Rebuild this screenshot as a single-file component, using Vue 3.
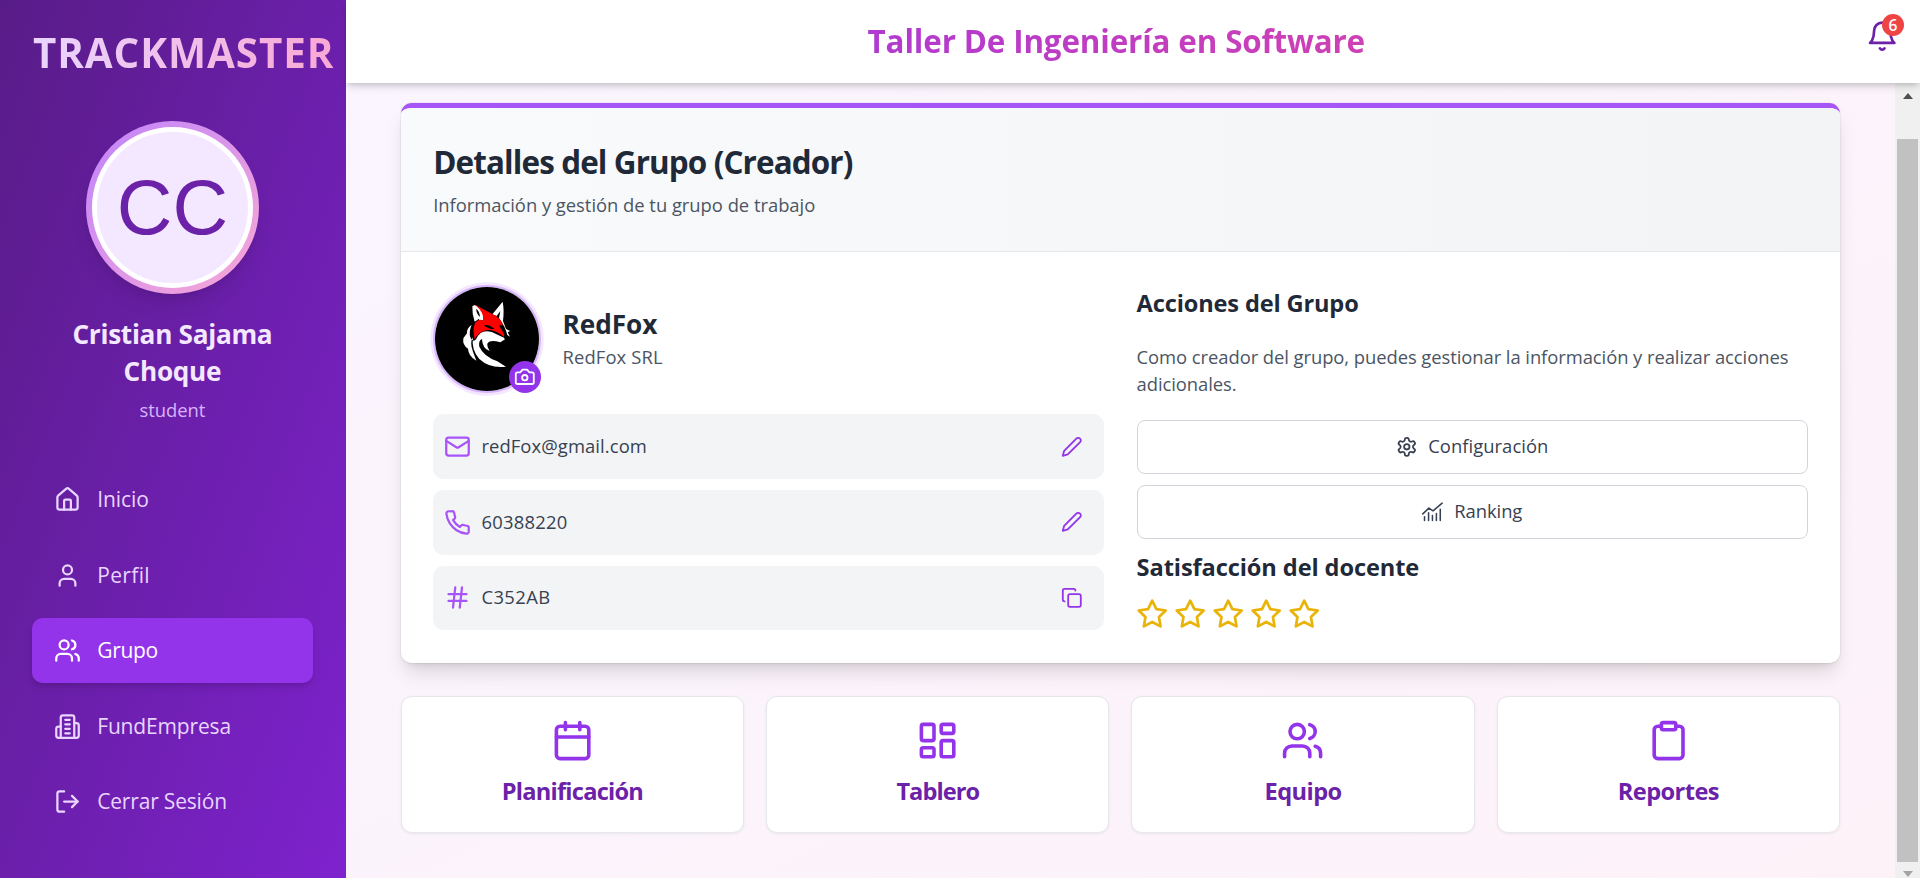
<script setup>
const icons = {
  home: '<path d="M15 21v-8a1 1 0 0 0-1-1h-4a1 1 0 0 0-1 1v8"/><path d="M3 10a2 2 0 0 1 .709-1.528l7-5.999a2 2 0 0 1 2.582 0l7 5.999A2 2 0 0 1 21 10v9a2 2 0 0 1-2 2H5a2 2 0 0 1-2-2z"/>',
  user: '<path d="M19 21v-2a4 4 0 0 0-4-4H9a4 4 0 0 0-4 4v2"/><circle cx="12" cy="7" r="4"/>',
  users: '<path d="M16 21v-2a4 4 0 0 0-4-4H6a4 4 0 0 0-4 4v2"/><circle cx="9" cy="7" r="4"/><path d="M22 21v-2a4 4 0 0 0-3-3.87"/><path d="M16 3.13a4 4 0 0 1 0 7.75"/>',
  building: '<path d="M6 22V4a2 2 0 0 1 2-2h8a2 2 0 0 1 2 2v18Z"/><path d="M6 12H4a2 2 0 0 0-2 2v6a2 2 0 0 0 2 2h2"/><path d="M18 9h2a2 2 0 0 1 2 2v9a2 2 0 0 1-2 2h-2"/><path d="M10 6h4M10 10h4M10 14h4M10 18h4"/>',
  logout: '<path d="M9 21H5a2 2 0 0 1-2-2V5a2 2 0 0 1 2-2h4"/><path d="m16 17 5-5-5-5"/><path d="M21 12H9"/>',
  bell: '<path d="M6 8a6 6 0 0 1 12 0c0 7 3 9 3 9H3s3-2 3-9"/><path d="M10.3 21a1.94 1.94 0 0 0 3.4 0"/>',
  camera: '<path d="M14.5 4h-5L7 7H4a2 2 0 0 0-2 2v9a2 2 0 0 0 2 2h16a2 2 0 0 0 2-2V9a2 2 0 0 0-2-2h-3l-2.5-3z"/><circle cx="12" cy="13" r="3"/>',
  mail: '<rect width="20" height="16" x="2" y="4" rx="2"/><path d="m22 7-8.97 5.7a1.94 1.94 0 0 1-2.06 0L2 7"/>',
  phone: '<path d="M22 16.92v3a2 2 0 0 1-2.18 2 19.79 19.79 0 0 1-8.63-3.07 19.5 19.5 0 0 1-6-6 19.79 19.79 0 0 1-3.07-8.67A2 2 0 0 1 4.11 2h3a2 2 0 0 1 2 1.72 12.84 12.84 0 0 0 .7 2.81 2 2 0 0 1-.45 2.11L8.09 9.91a16 16 0 0 0 6 6l1.27-1.27a2 2 0 0 1 2.11-.45 12.84 12.84 0 0 0 2.81.7A2 2 0 0 1 22 16.92z"/>',
  hash: '<path d="M4 9h16M4 15h16M10 3 8 21M16 3l-2 18"/>',
  edit: '<path d="M17 3a2.85 2.83 0 1 1 4 4L7.5 20.5 2 22l1.5-5.5Z"/>',
  copy: '<rect width="14" height="14" x="8" y="8" rx="2"/><path d="M4 16c-1.1 0-2-.9-2-2V4c0-1.1.9-2 2-2h10c1.1 0 2 .9 2 2"/>',
  settings: '<path d="M12.22 2h-.44a2 2 0 0 0-2 2v.18a2 2 0 0 1-1 1.73l-.43.25a2 2 0 0 1-2 0l-.15-.08a2 2 0 0 0-2.73.73l-.22.38a2 2 0 0 0 .73 2.73l.15.1a2 2 0 0 1 1 1.72v.51a2 2 0 0 1-1 1.74l-.15.09a2 2 0 0 0-.73 2.73l.22.38a2 2 0 0 0 2.73.73l.15-.08a2 2 0 0 1 2 0l.43.25a2 2 0 0 1 1 1.73V20a2 2 0 0 0 2 2h.44a2 2 0 0 0 2-2v-.18a2 2 0 0 1 1-1.73l.43-.25a2 2 0 0 1 2 0l.15.08a2 2 0 0 0 2.73-.73l.22-.39a2 2 0 0 0-.73-2.73l-.15-.08a2 2 0 0 1-1-1.74v-.5a2 2 0 0 1 1-1.74l.15-.09a2 2 0 0 0 .73-2.73l-.22-.38a2 2 0 0 0-2.73-.73l-.15.08a2 2 0 0 1-2 0l-.43-.25a2 2 0 0 1-1-1.73V4a2 2 0 0 0-2-2z"/><circle cx="12" cy="12" r="3"/>',
  ranking: '<g stroke-width="1.7"><path d="m.9 14.3 6.7-6.4 4.7 3L22.4 2.4"/><path d="M2.8 17.6v4M7.3 13v8.6M11.6 16v5.6M16 14v7.6M20.3 9.2v12.4"/></g>',
  star: '<path d="m12 2 3.09 6.26L22 9.27l-5 4.87 1.18 6.88L12 17.77l-6.18 3.25L7 14.14 2 9.27l6.91-1.01L12 2z"/>',
  calendar: '<path d="M8 2v4M16 2v4"/><rect width="18" height="18" x="3" y="4" rx="2"/><path d="M3 10h18"/>',
  board: '<rect width="7" height="9" x="3" y="3" rx="1"/><rect width="7" height="5" x="14" y="3" rx="1"/><rect width="7" height="9" x="14" y="12" rx="1"/><rect width="7" height="5" x="3" y="16" rx="1"/>',
  clipboard: '<rect width="8" height="4" x="8" y="2" rx="1"/><path d="M16 4h2a2 2 0 0 1 2 2v14a2 2 0 0 1-2 2H6a2 2 0 0 1-2-2V6a2 2 0 0 1 2-2h2"/>',
}

const nav = [
  { label: 'Inicio', icon: 'home', cls: 't-inicio' },
  { label: 'Perfil', icon: 'user', cls: 't-perfil' },
  { label: 'Grupo', icon: 'users', cls: 't-grupo', active: true },
  { label: 'FundEmpresa', icon: 'building', cls: 't-fund' },
  { label: 'Cerrar Sesión', icon: 'logout', cls: 't-cerrar' },
]
const contact = [
  { text: 'redFox@gmail.com', icon: 'mail', action: 'edit', cls: 't-mail' },
  { text: '60388220', icon: 'phone', action: 'edit', cls: 't-phone' },
  { text: 'C352AB', icon: 'hash', action: 'copy', cls: 't-code' },
]
const tiles = [
  { label: 'Planificación', icon: 'calendar', cls: 't-plan' },
  { label: 'Tablero', icon: 'board', cls: 't-tab' },
  { label: 'Equipo', icon: 'users', cls: 't-eq' },
  { label: 'Reportes', icon: 'clipboard', cls: 't-rep' },
]
</script>

<template>
  <div class="app">
    <aside class="sidebar">
      <div class="brand">TRACKMASTER</div>
      <div class="avatar"><div class="avatar-inner">CC</div></div>
      <h2 class="user-name">Cristian Sajama<br />Choque</h2>
      <p class="role">student</p>
      <nav class="nav">
        <a v-for="n in nav" :key="n.label" class="nav-item" :class="{ active: n.active }">
          <svg class="icon i27" viewBox="0 0 24 24" v-html="icons[n.icon]" />
          <span :class="n.cls">{{ n.label }}</span>
        </a>
      </nav>
    </aside>

    <div class="page">
      <header class="topbar">
        <h1 class="course">Taller De Ingeniería en Software</h1>
        <button class="bell">
          <svg class="icon i32" viewBox="0 0 24 24" v-html="icons.bell" />
          <span class="badge">6</span>
        </button>
      </header>

      <div class="scroll-area">
        <main class="content">
          <section class="card">
            <div class="card-head">
              <h2 class="card-title">Detalles del Grupo (Creador)</h2>
              <p class="card-sub">Información y gestión de tu grupo de trabajo</p>
            </div>
            <div class="card-body">
              <div class="col">
                <div class="group">
                  <div class="logo">
                    <svg class="fox" viewBox="15 21 312 312">
                      <rect x="15" y="21" width="312" height="312" fill="#000" />
                      <path fill="#fff" d="M134 75 127 79q-1 25 7 46l12-8 5 6 9-3V98q-10-16-26-23ZM187 103l31-38q5 25 1 58l9 24 12 6-7 4 7 13-8-5q-7-26-25-51l4-21-11 15Z" />
                      <path fill="#f00" d="m135 74 50 27q22 8 33 31l-4 14 9 19-1 6q-38-32-67-15-15 8-21 22-7-28 1-49 13-16 24-6 6-24-24-49Z" />
                      <path fill="#000" d="M162 136q16-4 31 11-18 2-31-11ZM208 135l14 3 4 16-13-6ZM138 87q10 5 12 23-8-3-12-23Z" />
                      <path fill="#fff" d="m138 178q15-34 49-21l35 16 3 5-14 9q-30-9-38 2-4 8 6 24-22-7-23-36-11 4-8 23 12 28 54 44l26 16q-49 6-80-23-25-28-19-65-11 15 0 43l10 27q-24-14-25-36-17-10-14-31l11-15q-2-14 14-26-8 20-5 35 8 20 18 9Z" />
                      <path fill="#000" d="m224 167 7 2-3 7-6-2Z" />
                    </svg>
                    <span class="cam"><svg class="icon i22" viewBox="0 0 24 24" v-html="icons.camera" /></span>
                  </div>
                  <div class="group-info">
                    <h3 class="group-name">RedFox</h3>
                    <p class="group-legal">RedFox SRL</p>
                  </div>
                </div>
                <div class="rows">
                  <div v-for="c in contact" :key="c.text" class="row">
                    <svg class="icon i27 lead" viewBox="0 0 24 24" v-html="icons[c.icon]" />
                    <span class="row-text" :class="c.cls">{{ c.text }}</span>
                    <svg class="icon i22 act" viewBox="0 0 24 24" v-html="icons[c.action]" />
                  </div>
                </div>
              </div>
              <div class="col">
                <h3 class="sec t-acc">Acciones del Grupo</h3>
                <p class="desc">Como creador del grupo, puedes gestionar la información y realizar acciones<br />adicionales.</p>
                <div class="btns">
                  <button class="btn"><svg class="icon i22" viewBox="0 0 24 24" v-html="icons.settings" /><span class="t-conf">Configuración</span></button>
                  <button class="btn"><svg class="icon i22" viewBox="0 0 24 24" v-html="icons.ranking" /><span class="t-rank">Ranking</span></button>
                </div>
                <h3 class="sec t-sat">Satisfacción del docente</h3>
                <div class="stars">
                  <svg v-for="s in 5" :key="s" class="icon i32" viewBox="0 0 24 24" v-html="icons.star" />
                </div>
              </div>
            </div>
          </section>

          <section class="tiles">
            <div v-for="t in tiles" :key="t.label" class="tile">
              <svg class="icon i43" viewBox="0 0 24 24" v-html="icons[t.icon]" />
              <span class="tile-label" :class="t.cls">{{ t.label }}</span>
            </div>
          </section>
        </main>
        <div class="scrollbar">
          <span class="arrow up" />
          <span class="thumb" />
          <span class="arrow down" />
        </div>
      </div>
    </div>
  </div>
</template>

<style>
body { overflow: hidden; }
</style>

<style scoped>
* { box-sizing: border-box; }
h1, h2, h3, p { margin: 0; }
button { font: inherit; color: inherit; background: none; border: 0; padding: 0; }
.app {
  display: flex; width: 100%; height: 878px; overflow: hidden;
  font: 400 18.4px/27px "Open Sans", "Noto Sans", sans-serif; color: #374151;
}
.icon { flex: none; display: block; fill: none; stroke: currentColor; stroke-width: 2; stroke-linecap: round; stroke-linejoin: round; }
.i22 { width: 21.6px; height: 21.6px; }
.i27 { width: 27px; height: 27px; }
.i32 { width: 32.4px; height: 32.4px; }
.i43 { width: 43.2px; height: 43.2px; }

.sidebar {
  flex: none; width: 346px; height: 100%; padding: 29px 33.2px 0 32px;
  background: linear-gradient(to bottom right, #581c87, #7e22ce);
}
.brand {
  width: max-content; height: 48.6px; font-size: 40.4px; line-height: 48.6px; font-weight: 700; letter-spacing: .9px; margin-left: 1px;
  background: linear-gradient(to right, #e9d5ff, #f9a8d4); background-clip: text; -webkit-background-clip: text; color: transparent;
}
.avatar {
  width: 173px; height: 173px; margin: 43.4px auto 22px; padding: 6px; border-radius: 50%;
  background: linear-gradient(to bottom right, #c084fc, #f9a8d4); box-shadow: 0 13px 20px -4px rgba(0,0,0,.1), 0 5px 8px -5px rgba(0,0,0,.1);
}
.avatar-inner {
  width: 100%; height: 100%; border-radius: 50%; border: 5px solid #fff; background: #f3e8ff; color: #6b21a8;
  font: 77px/151px "Liberation Sans", Arial, sans-serif; text-align: center;
}
.user-name { text-align: center; font-size: 26.2px; line-height: 37px; font-weight: 700; letter-spacing: -.3px; color: #f3e8ff; }
.role { margin-top: 6px; text-align: center; color: #d8b4fe; }
.nav { margin-top: 44px; display: flex; flex-direction: column; gap: 10.6px; }
.nav-item {
  display: flex; align-items: center; gap: 16.6px; height: 65px; padding: 0 21.6px; border-radius: 10.8px;
  font-size: 21px; font-weight: 500; color: #e9d5ff;
}
.nav-item.active { background: #9333ea; color: #fff; box-shadow: 0 5px 8px -1px rgba(0,0,0,.1), 0 3px 5px -2px rgba(0,0,0,.1); }

.page { flex: 1; min-width: 0; display: flex; flex-direction: column; background: linear-gradient(to bottom right, #faf5ff, #fdf2f8); }
.topbar {
  position: relative; z-index: 2; flex: none; height: 83px; padding: 0 21.6px; display: flex; align-items: center;
  background: #fff; box-shadow: 0 5px 8px -1px rgba(0,0,0,.12), 0 3px 5px -2px rgba(0,0,0,.14);
}
.course {
  flex: 1; text-align: center; font-size: 31.4px; line-height: 43px; font-weight: 700; letter-spacing: -.165px; margin: -3px 0 0 -1px;
  background: linear-gradient(to right, #9333ea, #ec4899); background-clip: text; -webkit-background-clip: text; color: transparent;
}
.bell { position: relative; margin-top: -11px; color: #6b21a8; }
.badge {
  position: absolute; left: 16px; top: -5.5px; width: 22px; height: 22px; border-radius: 50%;
  background: #ef4444; color: #fff; font-size: 15.6px; line-height: 22px; font-weight: 600; text-align: center;
}

.scroll-area { flex: 1; min-height: 0; display: flex; }
.content { flex: 1; min-width: 0; padding: 20px 55px 0 54.8px; }
.scrollbar { flex: none; width: 25px; background: #f0f0f0; display: flex; flex-direction: column; align-items: center; }
.arrow { width: 0; height: 0; border: 5.5px solid transparent; }
.up { margin-top: 10px; border-top: 0; border-bottom: 6px solid #505050; }
.thumb { width: 21px; height: 723px; margin-top: 40px; background: #c1c1c1; }
.down { margin-top: 9px; border-bottom: 0; border-top: 6px solid #a3a3a3; }

.card {
  height: 560px; border-top: 5px solid #a855f7; border-radius: 10.8px; background: #fff; overflow: hidden;
  box-shadow: 0 0 0 1px rgba(0,0,0,.04), 0 13px 20px -4px rgba(0,0,0,.13), 0 5px 8px -5px rgba(0,0,0,.13);
}
.card-head { height: 144px; padding: 32.4px; border-bottom: 1px solid #e5e7eb; background: linear-gradient(to right, #f9fafb, #f3f4f6); }
.card-title { font-size: 31.4px; line-height: 43px; font-weight: 700; letter-spacing: -.87px; color: #1f2937; }
.card-sub { margin-top: 8px; letter-spacing: -.023px; color: #4b5563; }
.card-body { display: grid; grid-template-columns: 1fr 1fr; gap: 32.4px; padding: 33px 32.4px; }
.group { display: flex; align-items: center; gap: 21.4px; }
.group-info { padding-bottom: 2px; }
.logo { position: relative; width: 108px; height: 108px; border-radius: 50%; border: 2px solid #d8b4fe; box-shadow: 0 0 0 2.7px #f3e8ff; }
.fox { display: block; width: 104px; height: 104px; border-radius: 50%; }
.cam {
  position: absolute; right: -2px; bottom: -2px; width: 32.4px; height: 32.4px; border-radius: 50%;
  display: flex; align-items: center; justify-content: center; background: #9333ea; color: #fff;
}
.group-name { font-size: 26.2px; line-height: 37.8px; font-weight: 700; letter-spacing: -.044px; color: #1f2937; }
.group-legal { margin-top: -1px; letter-spacing: .109px; color: #4b5563; }
.rows { margin-top: 21px; display: flex; flex-direction: column; gap: 11px; }
.row { display: flex; align-items: center; height: 64.8px; padding: 0 21.6px 0 10.8px; border-radius: 10.8px; background: #f3f4f6; }
.lead { color: #a855f7; }
.row-text { flex: 1; margin: 0 0 2px 10.4px; }
.act { color: #9333ea; }

.sec { font-size: 23.6px; line-height: 37.8px; font-weight: 700; color: #1f2937; }
.desc { margin-top: 20.6px; letter-spacing: -.06px; color: #4b5563; white-space: nowrap; }
.btns { margin: 22.6px 0 9.6px; display: flex; flex-direction: column; gap: 11px; }
.btn { display: flex; align-items: center; justify-content: center; gap: 10.8px; height: 54px; border: 1px solid #d1d5db; border-radius: 8px; background: #fff; }
.btn span { margin-bottom: 2px; }
.stars { display: flex; gap: 5.6px; margin: 11.6px 0 0 -.4px; color: #eab308; }

.tiles { margin-top: 33px; display: grid; grid-template-columns: repeat(4, 1fr); gap: 22px; }
.tile {
  display: flex; flex-direction: column; align-items: center; gap: 11px; height: 137px; padding-top: 22px;
  border: 1px solid #e5e7eb; border-radius: 10.8px; background: #fff; box-shadow: 0 1px 3px rgba(0,0,0,.06); color: #9333ea;
}
.tile-label { font-size: 23.6px; line-height: 37.8px; font-weight: 700; color: #6b21a8; }

/* optical tracking per label */
.t-inicio { letter-spacing: -.05px; }
.t-perfil { letter-spacing: .35px; }
.t-grupo { letter-spacing: -.3px; }
.t-fund { letter-spacing: -.15px; }
.t-cerrar { letter-spacing: -.18px; }
.t-mail { letter-spacing: .1px; }
.t-phone { letter-spacing: .24px; }
.t-code { letter-spacing: .44px; }
.t-acc { letter-spacing: -.15px; }
.t-sat { letter-spacing: -.1px; }
.t-conf { letter-spacing: .05px; }
.t-rank { letter-spacing: -.07px; }
.t-plan { letter-spacing: -.76px; }
.t-tab { letter-spacing: -.95px; }
.t-eq { letter-spacing: -.55px; }
.t-rep { letter-spacing: -.56px; }
</style>
